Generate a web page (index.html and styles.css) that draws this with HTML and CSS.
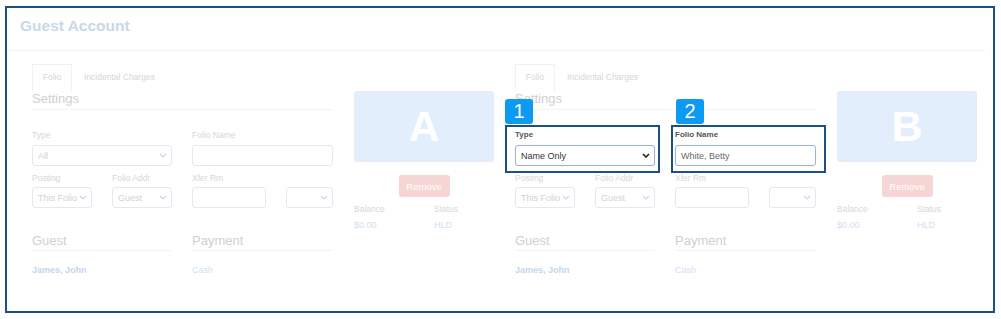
FILE: index.html
```html
<!DOCTYPE html>
<html>
<head>
    <link rel="stylesheet" href="styles.css">
</head>
<body>
    <div class="frame">
        <div class="header">
            <h1>Guest Account</h1>
        </div>

        <div class="panes">
            <div class="pane">
                <div class="tabs">
                    <div class="tab active">Folio</div>
                    <div class="tab">Incidental Charges</div>
                </div>
                <div class="pane-body">
                    <div class="form">
                        <h2>Settings</h2>
                        <div class="grid">
                            <div class="field">
                                <label>Type</label>
                                <div class="select"><span>All</span><svg width="8" height="5" viewBox="0 0 8 5"><path d="M1 1l3 3 3-3" fill="none" stroke="currentColor" stroke-width="1.2"/></svg></div>
                            </div>
                            <div class="field">
                                <label>Folio Name</label>
                                <div class="input"></div>
                            </div>
                            <div class="pair">
                                <div class="field">
                                    <label>Posting</label>
                                    <div class="select"><span>This Folio</span><svg width="8" height="5" viewBox="0 0 8 5"><path d="M1 1l3 3 3-3" fill="none" stroke="currentColor" stroke-width="1.2"/></svg></div>
                                </div>
                                <div class="field">
                                    <label>Folio Addr</label>
                                    <div class="select"><span>Guest</span><svg width="8" height="5" viewBox="0 0 8 5"><path d="M1 1l3 3 3-3" fill="none" stroke="currentColor" stroke-width="1.2"/></svg></div>
                                </div>
                            </div>
                            <div class="pair xfer">
                                <div class="field">
                                    <label>Xfer Rm</label>
                                    <div class="input"></div>
                                </div>
                                <div class="field">
                                    <label>&nbsp;</label>
                                    <div class="select"><span></span><svg width="8" height="5" viewBox="0 0 8 5"><path d="M1 1l3 3 3-3" fill="none" stroke="currentColor" stroke-width="1.2"/></svg></div>
                                </div>
                            </div>
                        </div>
                        <div class="grid lower">
                            <div>
                                <h2>Guest</h2>
                                <a class="link">James, John</a>
                            </div>
                            <div>
                                <h2>Payment</h2>
                                <span class="value">Cash</span>
                            </div>
                        </div>
                    </div>
                    <div class="side">
                        <div class="card">A</div>
                        <button class="remove">Remove</button>
                        <div class="stats">
                            <span class="stat-label">Balance</span>
                            <span class="stat-label">Status</span>
                            <span class="value">$0.00</span>
                            <span class="value">HLD</span>
                        </div>
                    </div>
                </div>
            </div>

            <div class="pane">
                <div class="tabs">
                    <div class="tab active">Folio</div>
                    <div class="tab">Incidental Charges</div>
                </div>
                <div class="pane-body">
                    <div class="form">
                        <h2>Settings</h2>
                        <div class="grid">
                            <div class="field focus">
                                <label>Type</label>
                                <div class="select"><span>Name Only</span><svg width="8" height="5" viewBox="0 0 8 5"><path d="M1 1l3 3 3-3" fill="none" stroke="currentColor" stroke-width="1.6"/></svg></div>
                            </div>
                            <div class="field focus">
                                <label>Folio Name</label>
                                <div class="input">White, Betty</div>
                            </div>
                            <div class="pair">
                                <div class="field">
                                    <label>Posting</label>
                                    <div class="select"><span>This Folio</span><svg width="8" height="5" viewBox="0 0 8 5"><path d="M1 1l3 3 3-3" fill="none" stroke="currentColor" stroke-width="1.2"/></svg></div>
                                </div>
                                <div class="field">
                                    <label>Folio Addr</label>
                                    <div class="select"><span>Guest</span><svg width="8" height="5" viewBox="0 0 8 5"><path d="M1 1l3 3 3-3" fill="none" stroke="currentColor" stroke-width="1.2"/></svg></div>
                                </div>
                            </div>
                            <div class="pair xfer">
                                <div class="field">
                                    <label>Xfer Rm</label>
                                    <div class="input"></div>
                                </div>
                                <div class="field">
                                    <label>&nbsp;</label>
                                    <div class="select"><span></span><svg width="8" height="5" viewBox="0 0 8 5"><path d="M1 1l3 3 3-3" fill="none" stroke="currentColor" stroke-width="1.2"/></svg></div>
                                </div>
                            </div>
                        </div>
                        <div class="grid lower">
                            <div>
                                <h2>Guest</h2>
                                <a class="link">James, John</a>
                            </div>
                            <div>
                                <h2>Payment</h2>
                                <span class="value">Cash</span>
                            </div>
                        </div>
                    </div>
                    <div class="side">
                        <div class="card">B</div>
                        <button class="remove">Remove</button>
                        <div class="stats">
                            <span class="stat-label">Balance</span>
                            <span class="stat-label">Status</span>
                            <span class="value">$0.00</span>
                            <span class="value">HLD</span>
                        </div>
                    </div>
                </div>
            </div>
        </div>

        <div class="callout callout-1"><span class="badge">1</span></div>
        <div class="callout callout-2"><span class="badge">2</span></div>
    </div>
</body>
</html>
```

FILE: styles.css
```css
body {
    margin: 0;
    font-family: 'Liberation Sans', Arial, sans-serif;
    background: #fff;
}

.frame {
    position: relative;
    box-sizing: border-box;
    width: 990px;
    height: 307px;
    margin: 6px 0 0 5px;
    border: 2px solid #1c4f83;
    background: #fff;
}

.header {
    padding: 9px 0 0 10px;
    margin-right: 8px;
    border-bottom: 1px solid #f2f4f6;
    height: 33px;
}

h1 {
    margin: 0 0 0 3px;
    font-size: 15.5px;
    line-height: 18px;
    font-weight: bold;
    color: #c8d8ea;
}

.panes {
    display: flex;
    gap: 21px;
    padding-left: 25px;
    margin-top: 13px;
}

.pane {
    width: 462px;
}

.tabs {
    display: flex;
    height: 27px;
}

.tab {
    box-sizing: border-box;
    padding: 0 11px;
    font-size: 8.5px;
    line-height: 25px;
    color: #d6d6d6;
    border: 1px solid transparent;
}

.tab.active {
    width: 40px;
    padding: 0;
    text-align: center;
    border-color: #f1f1f1;
    border-bottom: none;
}

.pane-body {
    display: flex;
    gap: 21px;
}

.form {
    width: 301px;
}

h2 {
    margin: 0;
    font-size: 13px;
    font-weight: normal;
    line-height: 16px;
    color: #d0d0d0;
    padding-bottom: 2px;
    border-bottom: 1px solid #f4f4f4;
}

.grid {
    display: grid;
    grid-template-columns: 140px 141px;
    column-gap: 20px;
    row-gap: 7px;
    margin-top: 20px;
}

.pair {
    display: grid;
    grid-template-columns: 60px 60px;
    column-gap: 20px;
}

.pair.xfer {
    grid-template-columns: 74px 47px;
}

.field label {
    display: block;
    font-size: 8.5px;
    line-height: 10px;
    color: #d6d6d6;
    margin-bottom: 5px;
}

.pair .field label {
    margin-bottom: 4px;
}

.select,
.input {
    box-sizing: border-box;
    height: 21px;
    border: 1px solid #e2e9f2;
    border-radius: 3px;
    font-size: 9px;
    color: #d2d2d2;
    padding: 0 5px;
    display: flex;
    align-items: center;
}

.select {
    justify-content: space-between;
    padding-right: 4px;
}

.select svg {
    color: #cfd6de;
}

.field.focus label {
    font-size: 8px;
    font-weight: bold;
    color: #555;
}

.field.focus .select,
.field.focus .input {
    border-color: #9fb3cc;
    box-shadow: 0 0 1px #c4d4e8;
    color: #333;
}

.field.focus .input {
    color: #6a6a6a;
}

.field.focus .select svg {
    color: #222;
}

.grid.lower {
    margin-top: 25px;
}

.lower h2 {
    padding-bottom: 1px;
}

.link,
.value {
    display: block;
    font-size: 9px;
    line-height: 11px;
}

.lower .link,
.lower .value {
    margin-top: 14px;
}

.link {
    font-weight: bold;
    color: #c4d6ec;
}

.value {
    color: #d0e0f2;
}

.side {
    width: 140px;
    display: flex;
    flex-direction: column;
    align-items: center;
}

.card {
    box-sizing: border-box;
    width: 140px;
    height: 71px;
    background: #e3eefc;
    border: 1px solid #e6ebf2;
    border-radius: 3px;
    color: #fff;
    font-size: 43px;
    font-weight: bold;
    line-height: 69px;
    text-align: center;
}

.remove {
    margin-top: 13px;
    width: 51px;
    height: 22px;
    padding: 0;
    border: none;
    border-radius: 3px;
    background: #f7d5d5;
    color: #fff;
    font-family: inherit;
    font-size: 9.5px;
}

.stats {
    align-self: stretch;
    display: grid;
    grid-template-columns: 80px auto;
    row-gap: 6px;
    margin-top: 7px;
}

.stat-label {
    font-size: 8.5px;
    line-height: 10px;
    color: #d8d8d8;
}

.stats .value {
    line-height: 10px;
}

.callout {
    position: absolute;
    box-sizing: border-box;
    width: 155px;
    height: 48px;
    top: 117px;
    border: 2px solid #1c4f83;
}

.callout-1 {
    left: 498px;
}

.callout-2 {
    left: 664px;
}

.badge {
    position: absolute;
    top: -28px;
    width: 28px;
    height: 25px;
    background: #0c9af2;
    border-radius: 3px;
    color: #fff;
    font-size: 20px;
    line-height: 25px;
    text-align: center;
}

.callout-1 .badge {
    left: -2px;
}

.callout-2 .badge {
    left: 3px;
}
```
